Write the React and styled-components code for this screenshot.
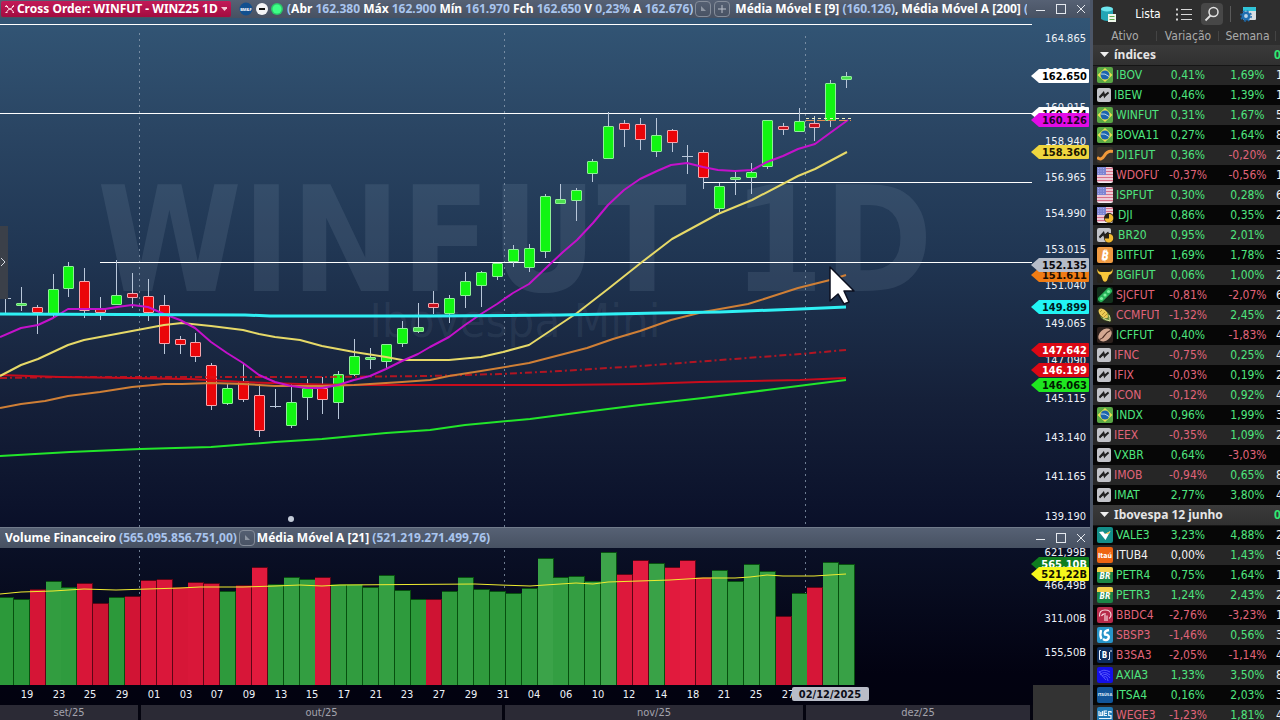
import React from "react";
import styled, { createGlobalStyle } from "styled-components";

const GlobalStyle = createGlobalStyle`
  * {
    box-sizing: border-box;
  }
  body {
    margin: 0;
    background: #02020f;
    color: #fff;
    font-family: "DejaVu Sans Condensed", "Noto Sans", sans-serif;
    font-size: 12px;
  }
  button {
    border: 0;
    padding: 0;
    margin: 0;
    background: none;
    color: inherit;
    font: inherit;
  }
`;

const Screen = styled.div`
  display: flex;
  height: 100vh;
  overflow: hidden;
`;

const Charts = styled.main`
  flex: 1;
  min-width: 0;
  display: flex;
  flex-direction: column;
`;

const TitleBar = styled.header`
  display: flex;
  align-items: center;
  flex: none;
  height: ${props => props.$height}px;
  padding: 0 3px 0 ${props => props.$left}px;
  background: linear-gradient(#566174, #475162);
  border-top: ${props => (props.$line ? "1px solid #717b8b" : "0")};
  font-family: "Noto Sans", sans-serif;
  font-weight: 700;
  font-size: 12px;
  line-height: 16px;
  white-space: nowrap;
`;

const OrderButton = styled.button`
  display: flex;
  align-items: center;
  gap: 3px;
  flex: none;
  width: 230px;
  height: 16px;
  padding: 0 4px;
  border-radius: 2px;
  background: linear-gradient(#c21a58, #a30c40);
  text-align: left;

  span {
    flex: 1;
  }
`;

const Badges = styled.div`
  display: flex;
  flex: none;
  gap: 3px;
  margin: 0 4px 0 8px;
`;

const Legend = styled.div`
  flex: ${props => (props.$grow ? "1" : "none")};
  min-width: 0;
  margin-left: ${props => props.$gap || 0}px;
  overflow: hidden;
`;

const Value = styled.span`
  color: #a9c5ee;
`;

const LegendButton = styled.button`
  display: flex;
  align-items: center;
  justify-content: center;
  flex: none;
  width: 16px;
  height: 16px;
  margin-left: ${props => props.$gap}px;
  border: 1px solid #858d9a;
  border-radius: 4px;
`;

const WindowButtons = styled.div`
  display: flex;
  flex: none;
  gap: 8px;
  margin-left: auto;
  padding-left: 8px;

  button {
    width: 12px;
    height: 12px;
  }
  svg {
    display: block;
  }
`;

const Plot = styled.svg`
  display: block;
  flex: none;
  width: 100%;
  height: auto;
`;

const MonthBar = styled.div`
  display: grid;
  grid-template-columns: 141fr 364fr 301fr 227fr 57fr;
  flex: 1;
  min-height: 15px;
`;

const Month = styled.div`
  background: #2b2a35;
  border-right: 3px solid #04040f;
  color: #a3a3ad;
  text-align: center;
  font-size: 11px;
  line-height: 15px;
`;

const Corner = styled.div`
  background: #333;
`;

const Watchlist = styled.aside`
  flex: none;
  width: 190px;
  overflow: hidden;
  border-left: 3px solid #4b5566;
  background: #2e2e2e;
`;

const Toolbar = styled.div`
  display: flex;
  align-items: center;
  height: 27px;
  padding-left: 6px;
`;

const ToolButton = styled.button`
  display: flex;
  align-items: center;
  justify-content: center;
  width: ${props => props.$width}px;
  height: 22px;
  border-radius: 4px;
  background: ${props => (props.$active ? "#474747" : "none")};
`;

const ListName = styled.button`
  width: 56px;
  padding-left: 6px;
  text-align: center;
`;

const Divider = styled.span`
  width: 1px;
  height: 16px;
  margin: 0 7px;
  background: #5a5a5a;
`;

const ToolGap = styled.span`
  width: 6px;
`;

const Quotes = styled.table`
  width: 240px;
  table-layout: fixed;
  border-collapse: collapse;

  th,
  td {
    padding: 0;
  }
`;

const Heading = styled.th`
  height: 18px;
  color: #ababab;
  font-weight: 400;
  background: linear-gradient(#444, #444) right center / 1px 10px no-repeat;
`;

const GroupCell = styled.th`
  height: 20px;
  background: linear-gradient(#3a3a3a, #303030);
  border-bottom: 1px solid #151515;
  text-align: left;
`;

const GroupLine = styled.div`
  display: grid;
  grid-template-columns: 7px 174px auto;
  align-items: center;
  color: #e6e6e6;
  font-family: "Noto Sans", sans-serif;
  font-size: 12px;
  line-height: 19px;
`;

const GroupToggle = styled.button`
  grid-column: 2;
  display: flex;
  align-items: center;
  gap: 5px;
  text-align: left;
`;

const GroupTotal = styled.span`
  color: #2fe873;
`;

const Row = styled.tr`
  height: 20px;
  background: ${props => (props.$dark ? "#060606" : "#262626")};
`;

const tones = { up: "#4fe57f", down: "#e0647a", flat: "#f2f2f2" };

const Cell = styled.td`
  color: ${props => tones[props.$tone]};
  text-align: ${props => props.$align || "center"};
  white-space: nowrap;
  line-height: 18px;
`;

const Asset = styled.div`
  display: flex;
  align-items: center;
  gap: 3px;
  width: 66px;
  padding-left: 4px;
  overflow: hidden;

  svg {
    flex: none;
  }
`;

// x, kind, body top, body bottom, high, low
const candles = [
  ["x", 298, 298, 293, 313],
  ["g", 303, 306, 287, 311],
  ["r", 307, 313, 305, 334],
  ["g", 289, 314, 274, 317],
  ["g", 266, 289, 262, 297],
  ["r", 281, 311, 268, 318],
  ["r", 308, 313, 297, 320],
  ["g", 295, 305, 260, 305],
  ["r", 293, 298, 273, 308],
  ["r", 296, 313, 279, 321],
  ["r", 305, 344, 295, 354],
  ["r", 339, 345, 336, 354],
  ["r", 342, 357, 333, 362],
  ["r", 365, 406, 363, 410],
  ["g", 388, 404, 383, 405],
  ["r", 381, 400, 363, 402],
  ["r", 395, 431, 384, 437],
  ["x", 406, 406, 389, 408],
  ["g", 402, 426, 384, 428],
  ["g", 388, 398, 379, 420],
  ["r", 388, 400, 377, 414],
  ["g", 374, 403, 371, 419],
  ["g", 356, 375, 339, 376],
  ["g", 357, 359, 348, 369],
  ["g", 344, 362, 344, 368],
  ["g", 328, 344, 321, 347],
  ["g", 327, 332, 303, 333],
  ["r", 303, 308, 291, 314],
  ["g", 298, 314, 295, 323],
  ["g", 281, 296, 272, 308],
  ["g", 272, 286, 271, 307],
  ["g", 263, 277, 263, 280],
  ["g", 249, 262, 245, 267],
  ["g", 248, 268, 244, 272],
  ["g", 196, 252, 194, 258],
  ["g", 199, 204, 184, 204],
  ["g", 190, 201, 188, 221],
  ["g", 161, 174, 159, 182],
  ["g", 126, 159, 112, 159],
  ["r", 123, 130, 120, 147],
  ["r", 124, 140, 118, 150],
  ["g", 135, 152, 118, 157],
  ["r", 130, 143, 129, 152],
  ["x", 156, 156, 145, 174],
  ["r", 152, 178, 150, 189],
  ["g", 186, 209, 183, 212],
  ["g", 177, 180, 170, 195],
  ["g", 172, 178, 163, 194],
  ["g", 120, 167, 120, 169],
  ["r", 126, 130, 123, 135],
  ["g", 121, 132, 108, 132],
  ["r", 123, 128, 116, 141],
  ["g", 83, 121, 80, 127],
  ["g", 76, 80, 72, 88]
];

const slot = 15.87;
const centre = index => Math.round(5 + index * slot) + 0.5;

const volumeTops = [
  598, 600, 590, 582, 588, 584, 604, 598, 597, 581, 580, 588, 583, 584, 592,
  586, 568, 585, 578, 580, 578, 585, 585, 588, 576, 591, 600, 600, 592, 578,
  590, 592, 594, 589, 559, 578, 577, 582, 553, 575, 561, 564, 568, 561, 578,
  571, 582, 565, 572, 617, 594, 588, 563, 565
];
const volumeKinds = "ggrggrrgrrrrrrgrrgggrggggggrgggggggggggrrgrrrggggrgrgg";

const averages = [
  {
    color: "#d8121c",
    width: 2,
    dash: "7 3 2 3",
    opacity: 0.8,
    points:
      "0,378 60,377 180,377 320,377 430,376 500,374 560,371 640,366 720,360 800,354 846,350"
  },
  {
    color: "#c80c1c",
    width: 2,
    points:
      "0,375 60,377 130,378 190,379 243,382 300,384 350,385 560,385 640,384 700,382 800,380 846,378"
  },
  {
    color: "#22e62a",
    width: 2,
    points:
      "0,456 70,452 140,449 211,447 275,442 322,439 386,433 430,430 465,425 530,419 576,413 640,405 703,398 767,390 814,384 846,380"
  },
  {
    color: "#cf7f36",
    width: 2,
    points:
      "0,408 21,404 45,401 68,396 100,392 132,387 164,384 182,384 211,383 243,384 275,386 322,386 354,385 402,382 430,380 449,376 481,371 529,363 587,348 613,339 640,331 671,320 703,312 748,304 767,298 798,288 830,280 846,275"
  },
  {
    color: "#e6d968",
    width: 2,
    points:
      "0,376 21,365 38,359 53,352 68,345 84,340 100,337 132,331 164,325 182,323 211,326 243,330 259,334 275,337 300,340 322,346 354,352 386,357 402,360 449,360 481,357 503,352 529,345 577,313 608,289 642,262 672,239 718,214 752,200 798,176 815,169 847,152"
  },
  {
    color: "#c411cb",
    width: 2,
    points:
      "0,337 21,328 38,325 53,318 68,309 84,309 105,309 117,307 132,305 148,307 164,314 180,320 195,328 211,342 227,353 243,363 259,375 275,382 291,386 307,388 322,388 338,385 354,380 370,376 386,369 402,361 418,354 430,347 449,337 465,325 481,314 497,304 513,293 529,284 547,267 563,252 577,240 593,223 608,205 624,190 640,179 657,171 671,165 687,163 703,167 718,170 735,171 752,170 767,162 783,156 798,149 815,144 830,133 848,120"
  },
  {
    color: "#2ff0f4",
    width: 3,
    points:
      "0,314 245,315 270,316 330,316 430,316 560,315 660,313 720,312 800,309 846,307"
  }
];

const volumeAverage =
  "0,594 21,592 53,591 84,589 116,590 180,588 200,587 243,587 275,586 300,585 322,586 340,585 475,584 500,585 530,586 545,585 576,583 593,584 608,582 670,580 703,578 735,578 750,577 767,575 783,576 814,576 846,574";

const prices = [
  ["164.865", 38],
  ["162.890", 72],
  ["160.915", 107],
  ["158.940", 141],
  ["156.965", 177],
  ["154.990", 213],
  ["153.015", 249],
  ["151.040", 285],
  ["149.065", 323],
  ["147.090", 360],
  ["145.115", 398],
  ["143.140", 437],
  ["141.165", 476],
  ["139.190", 516]
];

const priceTags = [
  ["162.650", 76, "#ffffff", "#000"],
  ["160.474", 114, "#ffffff", "#000"],
  ["160.126", 120, "#e30be6", "#22002a"],
  ["158.360", 152, "#efd63f", "#1c1600"],
  ["151.611", 275, "#f07c14", "#1c0d00"],
  ["152.135", 265, "#b6bcc8", "#08080c"],
  ["149.899", 307, "#22f4f4", "#001c1c"],
  ["147.642", 350, "#dc0814", "#fff"],
  ["146.199", 370, "#dc0814", "#fff"],
  ["146.063", 385, "#1fe620", "#001c00"]
];

const volumes = [
  ["621,99B", 552],
  ["466,49B", 585],
  ["311,00B", 618],
  ["155,50B", 652]
];

const volumeTags = [
  ["565,10B", 564, "#0f7d1f", "#fff"],
  ["521,22B", 574, "#f6f61c", "#101000"]
];

const days = [
  "19", "23", "25", "29", "01", "03", "07", "09", "13", "15", "17", "21", "23",
  "27", "29", "31", "04", "06", "10", "12", "14", "18", "21", "25", "27"
];

const AxisText = styled.text`
  fill: ${props => props.$fill || "#eef2f8"};
  font-size: 11px;
  font-weight: ${props => (props.$bold ? 700 : 400)};
  text-anchor: ${props => props.$anchor || "end"};
`;

const Watermark = styled.text`
  fill: #96aabe;
  fill-opacity: ${props => (props.$bold ? 0.14 : 0.1)};
  text-anchor: middle;
  font-size: ${props => props.$size}px;
  font-weight: ${props => (props.$bold ? 700 : 400)};
`;

const Tag = ({ label, y, fill, color }) => (
  <g>
    <path
      d={`M1031 ${y} L1039 ${y - 7} H1088 Q1089 ${y - 7} 1089 ${y - 6} V${y +
        6} Q1089 ${y + 7} 1088 ${y + 7} H1039 Z`}
      fill={fill}
    />
    <AxisText x="1087" y={y + 4} $bold $fill={color}>
      {label}
    </AxisText>
  </g>
);

const Candle = ({ index, kind, top, bottom, high, low }) => {
  const x = centre(index);
  if (kind === "x") {
    return (
      <path
        d={`M${x} ${high} V${low} M${x - 5.5} ${top + 0.5} H${x + 5.5}`}
        stroke="#b9c7da"
      />
    );
  }
  const thin = bottom - top < 6;
  const green = thin ? "#4be04f" : "#12f512";
  const red = thin ? "#c80f1c" : "#ea0509";
  return (
    <g>
      <path d={`M${x} ${high} V${low}`} stroke="#b9c7da" />
      <rect
        x={x - 5}
        y={top + 0.5}
        width="10"
        height={Math.max(bottom - top - 1, 2)}
        rx="0.5"
        fill={kind === "g" ? green : red}
        stroke={kind === "g" ? "#8df096" : "#f4a6ae"}
      />
    </g>
  );
};

const PriceChart = () => (
  <Plot viewBox="0 18 1090 509" role="img" aria-label="WINFUT 1D">
    <defs>
      <linearGradient id="sky" x1="0" y1="0" x2="0" y2="1">
        <stop offset="0" stopColor="#325575" />
        <stop offset="0.22" stopColor="#2a4563" />
        <stop offset="0.46" stopColor="#203653" />
        <stop offset="0.75" stopColor="#152039" />
        <stop offset="1" stopColor="#0a1029" />
      </linearGradient>
    </defs>
    <rect y="18" width="1090" height="509" fill="url(#sky)" />
    <Watermark x="515" y="291" $size={146} $bold>
      WINFUT 1D
    </Watermark>
    <Watermark x="515" y="337" $size={47}>
      Ibovespa Mini
    </Watermark>
    <path
      d="M139.5 33 V527 M504.5 33 V527 M805.5 36 V527"
      stroke="#8fa0b4"
      strokeOpacity="0.75"
      strokeDasharray="2 4"
    />
    <path
      d="M0 24.5 H1032 M0 113.5 H1032 M703 182.5 H1032 M100 262.5 H1032"
      stroke="#fff"
    />
    {candles.map(([kind, top, bottom, high, low], index) => (
      <Candle
        key={index}
        index={index}
        kind={kind}
        top={top}
        bottom={bottom}
        high={high}
        low={low}
      />
    ))}
    {averages.map(line => (
      <polyline
        key={line.color}
        points={line.points}
        fill="none"
        stroke={line.color}
        strokeWidth={line.width}
        strokeDasharray={line.dash}
        strokeOpacity={line.opacity}
        strokeLinejoin="round"
      />
    ))}
    <path d="M806 118.5 H851" stroke="#f4f0c0" strokeDasharray="3 3" />
    <path d="M806 120.5 H851" stroke="#e08a50" strokeDasharray="8 3" />
    <circle cx="291" cy="519" r="3" fill="#c3cbd8" />
    <rect y="226" width="8" height="73" fill="#3b4049" />
    <path d="M1 258 L5 262 L1 266" fill="none" stroke="#d5d9e0" />
    {prices.map(([label, y]) => (
      <AxisText key={label} x="1086" y={y + 4}>
        {label}
      </AxisText>
    ))}
    {priceTags.map(([label, y, fill, color]) => (
      <Tag key={label} label={label} y={y} fill={fill} color={color} />
    ))}
    <path
      d="M830 267 V301 L838 294 L844 304 L849 302 L844 291 H854 Z"
      fill="#fff"
      stroke="#0c1020"
      strokeWidth="1.5"
      strokeLinejoin="round"
    />
  </Plot>
);

// taller bars are drawn lighter
const barFill = (kind, top) => {
  const light = Math.min(Math.max((610 - top) / 55, 0), 1);
  return kind === "g"
    ? `hsl(128, ${58 - light * 12}%, ${37 + light * 7}%)`
    : `hsl(${350 - light}, ${84 - light * 6}%, ${43 + light * 8}%)`;
};

const VolumeChart = () => (
  <Plot viewBox="0 548 1090 157" role="img" aria-label="Volume Financeiro">
    <defs>
      <linearGradient id="night" x1="0" y1="0" x2="0" y2="1">
        <stop offset="0" stopColor="#0a1026" />
        <stop offset="0.8" stopColor="#020211" />
        <stop offset="1" stopColor="#02020f" />
      </linearGradient>
    </defs>
    <rect y="548" width="1090" height="157" fill="url(#night)" />
    <path
      d="M139.5 550 V685 M504.5 550 V685 M805.5 550 V685"
      stroke="#8fa0b4"
      strokeOpacity="0.75"
      strokeDasharray="2 4"
    />
    {volumeTops.map((top, index) => {
      const kind = volumeKinds[index];
      const x = centre(index) - 7.5;
      return (
        <g key={index}>
          <rect
            x={x}
            y={top - 1}
            width="16"
            height={686 - top}
            fill={kind === "g" ? "#07500f" : "#5c0616"}
          />
          <rect
            x={x}
            y={top}
            width="15"
            height={685 - top}
            fill={barFill(kind, top)}
          />
        </g>
      );
    })}
    <polyline points={volumeAverage} fill="none" stroke="#f0ec30" />
    <rect x="1033" y="685" width="57" height="20" fill="#333" />
    {days.map((day, index) => (
      <AxisText
        key={index}
        x={27 + Math.round(index * 31.7)}
        y="698"
        $anchor="middle"
      >
        {day}
      </AxisText>
    ))}
    <rect x="792" y="687" width="77" height="14" rx="2" fill="#b9bdc8" />
    <AxisText x="830" y="698" $bold $anchor="middle" $fill="#0c0c16">
      02/12/2025
    </AxisText>
    {volumes.map(([label, y]) => (
      <AxisText key={label} x="1086" y={y + 4}>
        {label}
      </AxisText>
    ))}
    {volumeTags.map(([label, y, fill, color]) => (
      <Tag key={label} label={label} y={y} fill={fill} color={color} />
    ))}
  </Plot>
);

const WindowControls = () => (
  <WindowButtons>
    <button aria-label="Minimizar">
      <svg width="12" height="12" fill="none" stroke="#e4e8ee">
        <path d="M1 7.5 H10" />
      </svg>
    </button>
    <button aria-label="Maximizar">
      <svg width="12" height="12" fill="none" stroke="#e4e8ee">
        <rect x="1.5" y="1.5" width="9" height="9" />
      </svg>
    </button>
    <button aria-label="Fechar">
      <svg width="12" height="12" fill="none" stroke="#e4e8ee">
        <path d="M2 2 L10 10 M10 2 L2 10" />
      </svg>
    </button>
  </WindowButtons>
);

const CornerMark = () => (
  <svg width="8" height="8">
    <path d="M2 1 V6 H7 Z" fill="#8d95a2" />
  </svg>
);

const icons = {
  brazil: (
    <>
      <rect width="16" height="16" rx="2" fill="#5aa845" />
      <path d="M8 1 L15.5 8 L8 15 L0.5 8 Z" fill="#e8e052" />
      <circle cx="8" cy="8" r="4.5" fill="#1d63ad" />
      <path d="M4 7 Q8 6 12 9.5" fill="none" stroke="#b9d8ec" />
    </>
  ),
  bolt: (
    <>
      <rect y="1" width="14" height="14" rx="2" fill="#c2c3c8" />
      <path
        d="M2.5 10.5 L6.5 6 L7.5 9 L11.5 5.5"
        fill="none"
        stroke="#222"
        strokeWidth="2"
      />
      <path d="M2 11.5 L7 4.5 V8 Z M7 11.5 V8 L12 4.5 Z" fill="#222" />
    </>
  ),
  wave: (
    <>
      <rect width="16" height="16" rx="2" fill="#3a332c" />
      <path
        d="M0 10.5 C3 13 5.5 12 7.5 8.5 S12 3.5 16 4.5"
        fill="none"
        stroke="#f0993a"
        strokeWidth="3"
      />
    </>
  ),
  usa: (
    <>
      <rect width="16" height="16" rx="2" fill="#f3eaf0" />
      <path
        d="M0 1.5 H16 M0 4.5 H16 M0 7.5 H16 M0 10.5 H16 M0 13.5 H16"
        stroke="#d9718a"
        strokeWidth="1.4"
      />
      <rect width="9" height="8" fill="#7d85d2" />
      <path
        d="M1 1.5 H8 M1 4 H8 M1 6.5 H8"
        stroke="#a9afe6"
        strokeDasharray="1 1.5"
      />
    </>
  ),
  bitcoin: (
    <>
      <rect width="16" height="16" rx="2" fill="#ef9a42" />
      <text
        x="8"
        y="13"
        textAnchor="middle"
        fontSize="13"
        fontWeight="700"
        fill="#fff"
        transform="rotate(10 8 8)"
      >
        ₿
      </text>
    </>
  ),
  bull: (
    <>
      <rect width="16" height="16" rx="2" fill="#26231c" />
      <path
        d="M0.5 1.5 Q1 5.500 5 5 H11 Q15 5.500 15.5 1.5 Q16.5 6.500 12 8 L10 13.5 Q8 16 6 13.5 L4 8 Q-0.5 6.500 0.5 1.5 Z"
        fill="#f6c53a"
      />
    </>
  ),
  soy: (
    <>
      <rect width="16" height="16" rx="2" fill="#12301c" />
      <path
        d="M4 12 L12 4"
        stroke="#27b45a"
        strokeWidth="6"
        strokeLinecap="round"
      />
      <g fill="#7df0a0">
        <circle cx="4.5" cy="11.5" r="1.6" />
        <circle cx="8" cy="8" r="1.6" />
        <circle cx="11.5" cy="4.5" r="1.6" />
      </g>
    </>
  ),
  corn: (
    <>
      <rect width="16" height="16" rx="2" fill="#2a2a20" />
      <ellipse
        cx="6.5"
        cy="6.5"
        rx="6"
        ry="3.5"
        transform="rotate(45 6.5 6.5)"
        fill="#ecca55"
      />
      <path
        d="M3 5 L5 3 M5 8 L8 5 M7 10 L10 7"
        stroke="#a78426"
        strokeWidth="0.8"
      />
      <path
        d="M3 9 Q5 14 14 14.5 Q14 8 10 5 Q11.5 10 10.5 11.5 Q7 11.5 3 9 Z"
        fill="#6f8f3c"
      />
      <path d="M6 11 Q9 13 13 14 Q13 10 12 8" fill="none" stroke="#d5dd9c" />
    </>
  ),
  coffee: (
    <>
      <rect width="16" height="16" rx="2" fill="#2d211d" />
      <ellipse
        cx="8"
        cy="8"
        rx="7.5"
        ry="5.5"
        transform="rotate(-42 8 8)"
        fill="#d3a791"
      />
      <path
        d="M2.5 12.5 Q6 11.5 7.5 8.5 T13.5 3.5"
        fill="none"
        stroke="#4f2f25"
        strokeWidth="1.3"
      />
    </>
  ),
  vale: (
    <>
      <rect width="16" height="16" rx="2" fill="#138e88" />
      <path d="M2 5 L6 4.5 L8 7 L13.5 4 L8.5 13 Z" fill="#fff" />
      <path d="M8 7 L13.5 4 L12 6.8 Z" fill="#e6c352" />
    </>
  ),
  itau: (
    <>
      <rect width="16" height="16" rx="2" fill="#ee6413" />
      <text
        x="8"
        y="11"
        textAnchor="middle"
        fontSize="7"
        fontWeight="700"
        fill="#fff"
      >
        Itaú
      </text>
    </>
  ),
  petro: (
    <>
      <rect width="16" height="16" rx="2" fill="#1b8646" />
      <path d="M0 5 V2 Q0 0 2 0 H14 Q16 0 16 2 V5 Z" fill="#f5cf4a" />
      <text
        x="8"
        y="12"
        textAnchor="middle"
        fontSize="8"
        fontWeight="700"
        fontStyle="italic"
        fill="#fff"
      >
        BR
      </text>
    </>
  ),
  bradesco: (
    <>
      <rect width="16" height="16" rx="2" fill="#b62a49" />
      <path
        d="M2.5 9.5 Q2 3 8 3 Q14 3 14 8 Q14 10.5 12 11.5 M4.5 9 Q5.5 6.5 9 7 M8 8 V14 M10 8.5 V14"
        fill="none"
        stroke="#f6d5dc"
        strokeWidth="1.2"
      />
    </>
  ),
  sabesp: (
    <>
      <rect width="16" height="16" rx="2" fill="#2794c9" />
      <path
        d="M4 3 Q2.5 8 4.5 12 M12 3 Q6.5 4 8 7.5 Q13 8 11.5 11.5 Q9.5 14.5 6 12"
        fill="none"
        stroke="#fff"
        strokeWidth="2.4"
      />
    </>
  ),
  b3: (
    <>
      <rect width="16" height="16" rx="2" fill="#0d2d5c" />
      <path
        d="M4 3.5 H2.5 V12.5 H4 M11 12.5 H12.5 V5 M14 3 V5"
        fill="none"
        stroke="#e8f0fa"
      />
      <text
        x="7.5"
        y="11"
        textAnchor="middle"
        fontSize="8"
        fontWeight="700"
        fill="#fff"
      >
        B
      </text>
    </>
  ),
  axia: (
    <>
      <rect width="16" height="16" rx="2" fill="#1410e8" />
      <path
        d="M2 6 Q6 1 13 5 M3 8 Q7 3 13 8 M5 9 Q9 5 13 11 M7 10 Q10 8 11 14 M2 4 Q5 9 9 13"
        fill="none"
        stroke="#5c5cff"
        strokeWidth="0.9"
      />
    </>
  ),
  itausa: (
    <>
      <rect width="16" height="16" rx="2" fill="#125598" />
      <text
        x="8"
        y="9"
        textAnchor="middle"
        fontSize="4"
        fontWeight="700"
        fill="#dce8f5"
      >
        ITAÚSA
      </text>
    </>
  ),
  weg: (
    <>
      <rect width="16" height="16" rx="2" fill="#2179b4" />
      <path
        d="M2 4 V8.5 H5.5 V4 M3.8 5 V8.5 M10 4 H7.2 V8.5 H10 M7.2 6.3 H10 M14 6 V4.5 H11.7 V8.5 H14 V11.5 H2"
        fill="none"
        stroke="#eaf4fb"
        strokeWidth="1.2"
      />
    </>
  )
};

const AssetIcon = ({ name, delayed }) => (
  <svg
    width={name === "bolt" && !delayed ? 14 : delayed ? 18 : 16}
    height="16"
    aria-hidden="true"
  >
    {icons[name]}
    {delayed && (
      <>
        <circle cx="12" cy="11" r="5" fill="#2b2416" />
        <path
          d="M12 7 A4.2 4.2 0 1 1 7.8 11.5 H12 Z"
          fill="#f4bc33"
        />
      </>
    )}
  </svg>
);

const groups = [
  {
    name: "índices",
    rows: [
      ["brazil", "IBOV", "0,41%", "1,69%", "1"],
      ["bolt", "IBEW", "0,46%", "1,39%", "1"],
      ["brazil", "WINFUT", "0,31%", "1,67%", "5"],
      ["brazil", "BOVA11", "0,27%", "1,64%", "8"],
      ["wave", "DI1FUT", "0,36%", "-0,20%", "2"],
      ["usa", "WDOFUT", "-0,37%", "-0,56%", "1"],
      ["usa", "ISPFUT", "0,30%", "0,28%", "6"],
      ["usa", "DJI", "0,86%", "0,35%", "2", true],
      ["bolt", "BR20", "0,95%", "2,01%", "", true],
      ["bitcoin", "BITFUT", "1,69%", "1,78%", "3"],
      ["bull", "BGIFUT", "0,06%", "1,00%", "2"],
      ["soy", "SJCFUT", "-0,81%", "-2,07%", "6"],
      ["corn", "CCMFUT", "-1,32%", "2,45%", "2"],
      ["coffee", "ICFFUT", "0,40%", "-1,83%", "4"],
      ["bolt", "IFNC", "-0,75%", "0,25%", "4"],
      ["bolt", "IFIX", "-0,03%", "0,19%", "2"],
      ["bolt", "ICON", "-0,12%", "0,92%", "4"],
      ["brazil", "INDX", "0,96%", "1,99%", "3"],
      ["bolt", "IEEX", "-0,35%", "1,09%", "2"],
      ["bolt", "VXBR", "0,64%", "-3,03%", ""],
      ["bolt", "IMOB", "-0,94%", "0,65%", "8"],
      ["bolt", "IMAT", "2,77%", "3,80%", "4"]
    ]
  },
  {
    name: "Ibovespa 12 junho",
    darkFirst: true,
    rows: [
      ["vale", "VALE3", "3,23%", "4,88%", "2"],
      ["itau", "ITUB4", "0,00%", "1,43%", "9"],
      ["petro", "PETR4", "0,75%", "1,64%", "1"],
      ["petro", "PETR3", "1,24%", "2,43%", "2"],
      ["bradesco", "BBDC4", "-2,76%", "-3,23%", "1"],
      ["sabesp", "SBSP3", "-1,46%", "0,56%", "3"],
      ["b3", "B3SA3", "-2,05%", "-1,14%", "4"],
      ["axia", "AXIA3", "1,33%", "3,50%", "8"],
      ["itausa", "ITSA4", "0,16%", "2,03%", "3"],
      ["weg", "WEGE3", "-1,23%", "1,81%", "4"]
    ]
  }
];

const toneOf = change =>
  change.startsWith("-") ? "down" : change === "0,00%" ? "flat" : "up";

const QuoteTable = () => (
  <Quotes>
    <colgroup>
      <col width="64" />
      <col width="62" />
      <col width="57" />
      <col width="57" />
    </colgroup>
    <thead>
      <tr>
        <Heading>Ativo</Heading>
        <Heading>Variação</Heading>
        <Heading>Semana</Heading>
        <Heading />
      </tr>
    </thead>
    {groups.map(group => (
      <tbody key={group.name}>
        <tr>
          <GroupCell colSpan="4">
            <GroupLine>
              <GroupToggle>
                <svg width="9" height="5">
                  <path d="M0 0 H9 L4.5 5 Z" fill="#f0f0f0" />
                </svg>
                {group.name}
              </GroupToggle>
              <GroupTotal>0</GroupTotal>
            </GroupLine>
          </GroupCell>
        </tr>
        {group.rows.map(([icon, asset, day, week, trades, delayed], index) => (
          <Row key={asset} $dark={(index % 2 === 1) !== !!group.darkFirst}>
            <Cell $tone={toneOf(day)} $align="left">
              <Asset>
                <AssetIcon name={icon} delayed={delayed} />
                {asset}
              </Asset>
            </Cell>
            <Cell $tone={toneOf(day)}>{day}</Cell>
            <Cell $tone={toneOf(week)}>{week}</Cell>
            <Cell $tone="flat" $align="left">
              {trades}
            </Cell>
          </Row>
        ))}
      </tbody>
    ))}
  </Quotes>
);

const quote = [
  ["Abr", "162.380"],
  ["Máx", "162.900"],
  ["Mín", "161.970"],
  ["Fch", "162.650"],
  ["V", "0,23%"],
  ["A", "162.676"]
];

const App = () => {
  return (
    <Screen>
      <GlobalStyle />
      <Charts>
        <TitleBar $height={18} $left={1}>
          <OrderButton>
            <svg width="10" height="10" fill="none" stroke="#ffd9e4">
              <path d="M1 1 L3 4 L7 6 L9 9 M9 1 L7 4 L3 6 L1 9 M0 2.5 H3 M7 2.5 H10 M0.5 8.5 H2.5 M7.5 8.5 H9.5" />
            </svg>
            <span>Cross Order: WINFUT - WINZ25 1D</span>
            <svg width="7" height="4">
              <path d="M0 0 H7 L3.5 4 Z" fill="#f4c6d4" />
            </svg>
          </OrderButton>
          <Badges>
            <svg width="14" height="14">
              <circle cx="7" cy="7" r="6.5" fill="#12508f" />
              <text x="7" y="9" textAnchor="middle" fontSize="4" fill="#fff">
                BM&amp;F
              </text>
            </svg>
            <svg width="12" height="14">
              <circle cx="6" cy="7" r="6" fill="#f4f4f6" />
              <path d="M3 7 H9" stroke="#151515" strokeWidth="2" />
            </svg>
            <svg width="12" height="14">
              <circle cx="6" cy="7" r="6" fill="#2cc86a" />
              <circle cx="6" cy="7" r="4.5" fill="#3dff86" />
            </svg>
          </Badges>
          <Legend>
            <Value>(</Value>
            {quote.map(([name, value], index) => (
              <React.Fragment key={name}>
                {index > 0 && " "}
                {name} <Value>{value}</Value>
              </React.Fragment>
            ))}
            <Value>)</Value>
          </Legend>
          <LegendButton $gap={2} aria-label="Escala">
            <CornerMark />
          </LegendButton>
          <LegendButton $gap={3} aria-label="Adicionar">
            <svg width="10" height="10" fill="none" stroke="#b9bfc9">
              <path d="M1 5 H9 M5 1 V9" />
            </svg>
          </LegendButton>
          <Legend $grow $gap={5}>
            Média Móvel E [9] <Value>(160.126)</Value>, Média Móvel A [200]{" "}
            <Value>(149.899)</Value>
          </Legend>
          <WindowControls />
        </TitleBar>
        <PriceChart />
        <TitleBar $height={21} $left={5} $line>
          <Legend>
            Volume Financeiro <Value>(565.095.856.751,00)</Value>
          </Legend>
          <LegendButton $gap={2} aria-label="Escala">
            <CornerMark />
          </LegendButton>
          <Legend $gap={2}>
            Média Móvel A [21] <Value>(521.219.271.499,76)</Value>
          </Legend>
          <WindowControls />
        </TitleBar>
        <VolumeChart />
        <MonthBar>
          <Month>set/25</Month>
          <Month>out/25</Month>
          <Month>nov/25</Month>
          <Month>dez/25</Month>
          <Corner />
        </MonthBar>
      </Charts>
      <Watchlist>
        <Toolbar>
          <ToolButton $width={18} aria-label="Carteiras">
            <svg width="18" height="18">
              <path d="M2 4 V14 Q8 18 14 14 V4 Z" fill="#22a5b5" />
              <ellipse cx="8" cy="4" rx="6" ry="2.5" fill="#6ee6ee" />
              <rect x="9" y="9" width="8" height="8" fill="#eef6ea" />
              <path
                d="M10.5 11.5 H15.5 M10.5 14.5 H15.5"
                stroke="#5aa84a"
              />
            </svg>
          </ToolButton>
          <ListName>Lista</ListName>
          <ToolButton $width={22} aria-label="Exibir lista">
            <svg width="16" height="14" stroke="#d6d6d6">
              <path d="M5 2.5 H16 M5 7.5 H16 M5 12.5 H16" />
              <path d="M0 2.5 H2 M0 7.5 H2 M0 12.5 H2" strokeWidth="2" />
            </svg>
          </ToolButton>
          <ToolGap />
          <ToolButton $width={22} $active aria-label="Buscar">
            <svg width="16" height="16" fill="none" stroke="#e2e2e2">
              <circle cx="9.5" cy="6" r="4.5" strokeWidth="1.5" />
              <path d="M6.5 9.5 L1.5 14.5" strokeWidth="1.8" />
            </svg>
          </ToolButton>
          <Divider />
          <ToolButton $width={20} aria-label="Configurar">
            <svg width="17" height="16">
              <rect x="3" y="1" width="13" height="13" rx="1" fill="#d9dee2" />
              <path d="M3 5 V2 Q3 1 4 1 H15 Q16 1 16 2 V5 Z" fill="#2fc4d8" />
              <circle
                cx="6"
                cy="10"
                r="3.2"
                fill="#bcd4e6"
                stroke="#1f6fb2"
                strokeWidth="2.6"
              />
              <circle
                cx="6"
                cy="10"
                r="5.2"
                fill="none"
                stroke="#1f6fb2"
                strokeWidth="1.4"
                strokeDasharray="2 2.1"
              />
            </svg>
          </ToolButton>
        </Toolbar>
        <QuoteTable />
      </Watchlist>
    </Screen>
  );
};

export default App;
